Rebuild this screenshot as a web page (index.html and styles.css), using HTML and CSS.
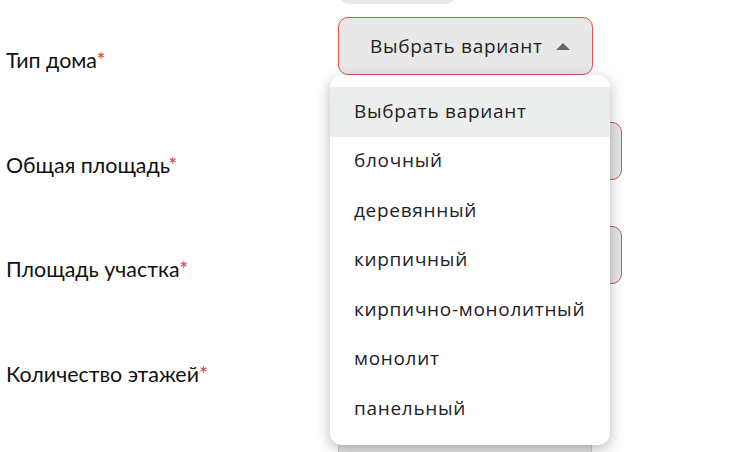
FILE: index.html
```html
<!DOCTYPE html>
<html lang="ru">
<head>
<meta charset="utf-8">
<link rel="stylesheet" href="styles.css">
</head>
<body>
<div class="form">
  <div class="prev-btn"></div>
  <div class="rows">
    <div class="row">
      <div class="label">Тип дома<span class="req">*</span></div>
      <div class="field">
        <div class="select">
          <span class="select-text">Выбрать вариант</span>
          <span class="caret"></span>
        </div>
        <ul class="menu">
          <li class="item active">Выбрать вариант</li>
          <li class="item">блочный</li>
          <li class="item">деревянный</li>
          <li class="item">кирпичный</li>
          <li class="item">кирпично-монолитный</li>
          <li class="item">монолит</li>
          <li class="item">панельный</li>
        </ul>
      </div>
    </div>
    <div class="row">
      <div class="label">Общая площадь<span class="req">*</span></div>
      <div class="field"><div class="input"></div></div>
    </div>
    <div class="row">
      <div class="label">Площадь участка<span class="req">*</span></div>
      <div class="field"><div class="input"></div></div>
    </div>
    <div class="row">
      <div class="label">Количество этажей<span class="req">*</span></div>
      <div class="field"><div class="input short"></div></div>
    </div>
    <div class="row">
      <div class="label"></div>
      <div class="field"><div class="input short plain"></div></div>
    </div>
  </div>
</div>
</body>
</html>
```

FILE: styles.css
```css
html, body {
  margin: 0;
  padding: 0;
  background: #ffffff;
  overflow: hidden;
}

body {
  font-family: Lato, "Noto Sans", sans-serif;
  color: #111111;
  width: 738px;
  height: 452px;
}

.form {
  height: 452px;
  overflow: hidden;
}

.prev-btn {
  margin-left: 338px;
  margin-top: -40px;
  width: 119px;
  height: 44px;
  border-radius: 12px;
  background: #e9e9e9;
}

.rows {
  margin-top: 13px;
  display: flex;
  flex-direction: column;
  gap: 46.5px;
}

.row {
  display: flex;
  height: 58px;
}

.label {
  width: 332px;
  padding-left: 6px;
  padding-top: 31px;
  font-size: 21.4px;
  line-height: 24px;
  white-space: nowrap;
}

.req {
  color: #d64545;
}

.field {
  position: relative;
}

.select {
  box-sizing: border-box;
  width: 255px;
  height: 58px;
  background: #e8e8e8;
  border: 1px solid #d9534f;
  border-radius: 10px;
  display: flex;
  align-items: center;
  padding-left: 31px;
  font-family: "Open Sans", sans-serif;
  font-size: 19px;
  letter-spacing: 0.7px;
  color: #222;
}

.caret {
  margin-left: 13px;
  width: 0;
  height: 0;
  border-left: 7.5px solid transparent;
  border-right: 7.5px solid transparent;
  border-bottom: 7px solid #666;
}

.input {
  box-sizing: border-box;
  width: 284px;
  height: 58px;
  background: #e6e6e6;
  border: 1px solid #d9534f;
  border-radius: 10px;
}

.input.short {
  width: 254px;
}

.input.plain {
  border-color: #cccccc;
}

.menu {
  position: absolute;
  left: -8px;
  top: 58px;
  width: 280px;
  height: 370px;
  box-sizing: border-box;
  margin: 0;
  padding: 12px 0 0;
  list-style: none;
  background: #ffffff;
  border-radius: 12px;
  box-shadow: 0 4px 14px rgba(0, 0, 0, 0.28);
  z-index: 2;
  font-family: "Open Sans", sans-serif;
  font-size: 19px;
  letter-spacing: 0.7px;
  color: #222;
}

.item {
  box-sizing: border-box;
  height: 49.5px;
  display: flex;
  align-items: center;
  padding-left: 24px;
  padding-bottom: 2px;
  white-space: nowrap;
}

.item.active {
  background: #eceeed;
}
```
